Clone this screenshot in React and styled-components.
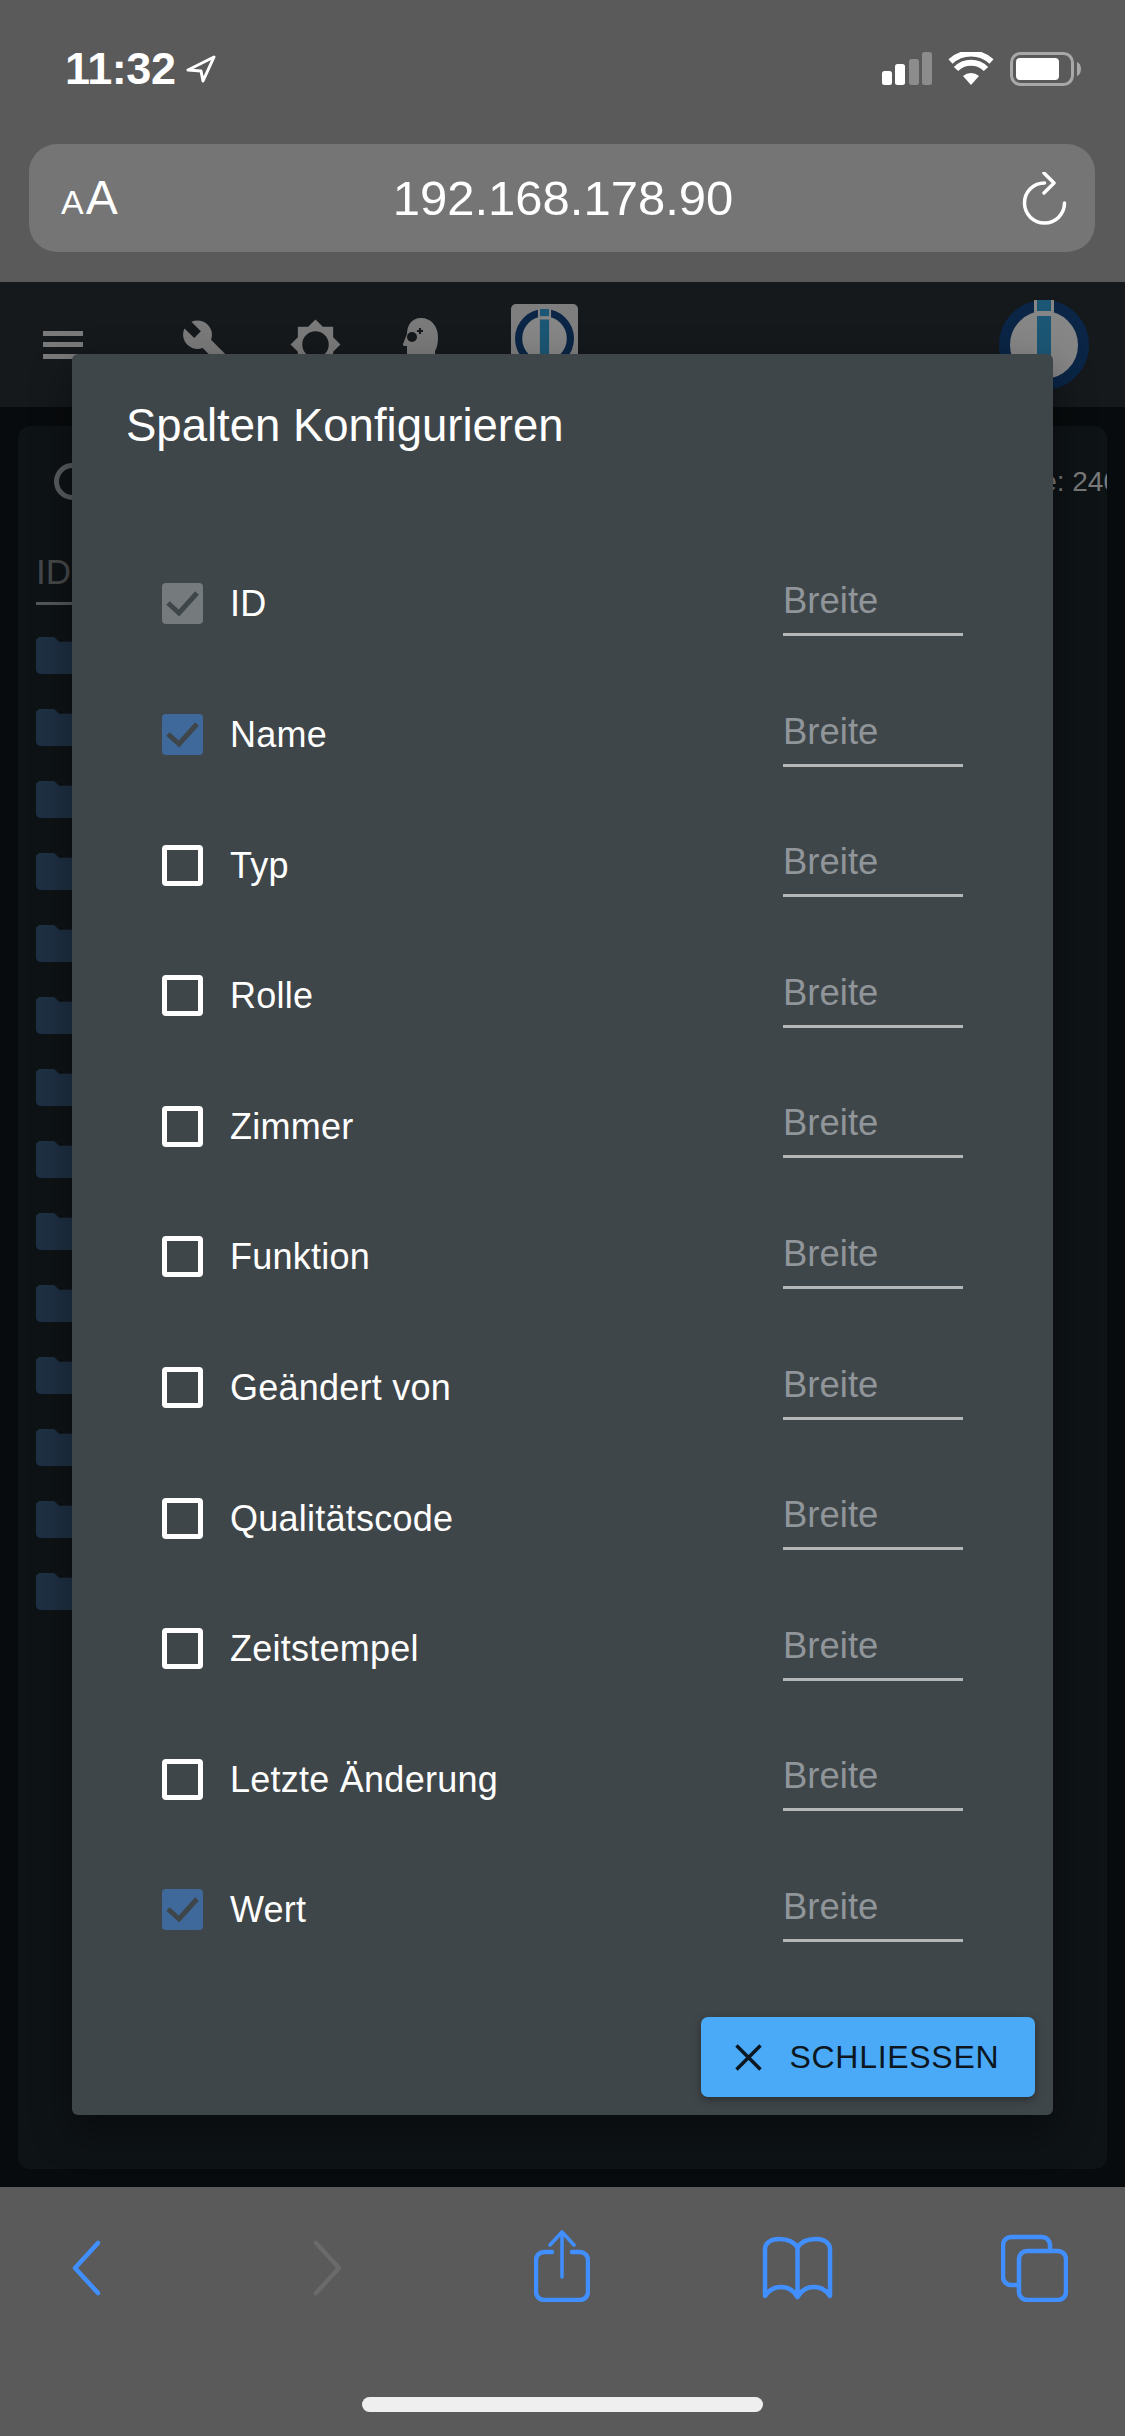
import styled, { createGlobalStyle } from "styled-components";

const GlobalStyle = createGlobalStyle`
  html, body {
    margin: 0;
    padding: 0;
    background: #5a5a5a;
  }
  * {
    box-sizing: border-box;
  }
`;

const Screen = styled.div`
  position: relative;
  width: 1125px;
  height: 2436px;
  overflow: hidden;
  display: flex;
  flex-direction: column;
  font-family: "Liberation Sans", Arial, sans-serif;
`;

/* safari top */
const TopChrome = styled.div`
  height: 282px;
  background: #5a5a5a;
  color: #fff;
  flex: none;
`;

const StatusBar = styled.div`
  height: 144px;
  padding: 52px 44px 0 65px;
  display: flex;
  justify-content: space-between;
  align-items: flex-start;
`;

const TimeGroup = styled.div`
  display: flex;
  align-items: center;
  gap: 10px;
  height: 33px;
`;

const Time = styled.span`
  font-size: 45px;
  font-weight: 700;
  line-height: 33px;
  letter-spacing: -0.4px;
`;

const StatusIcons = styled.div`
  display: flex;
  align-items: flex-start;
  gap: 16px;
`;

const UrlBar = styled.div`
  margin: 0 30px 0 29px;
  height: 108px;
  padding: 0 28px 0 32px;
  border-radius: 28px;
  background: #757575;
  display: grid;
  grid-template-columns: 1fr auto 1fr;
  align-items: center;
`;

const ReaderToggle = styled.div`
  display: flex;
  align-items: baseline;
  gap: 2px;
  padding-top: 4px;
`;

const ReaderLetter = styled.span`
  font-size: ${(props) => props.$size}px;
  line-height: 50px;
`;

const Url = styled.div`
  font-size: 49px;
  line-height: 56px;
  margin: -1px 0 0 -2px;
`;

const ReloadSlot = styled.div`
  display: flex;
  justify-content: flex-end;
  height: 53px;
`;

/* page behind the dialog */
const Page = styled.div`
  flex: 1;
  min-height: 0;
  background: #080b0d;
  display: flex;
  flex-direction: column;
`;

const Header = styled.header`
  height: 125px;
  flex: none;
  padding: 0 36px 0 43px;
  background: #15191c;
  display: flex;
  align-items: center;
`;

const Burger = styled.div`
  width: 40px;
  display: flex;
  flex-direction: column;
  gap: 6.5px;
  span {
    height: 5px;
    background: #7a7a7a;
  }
`;

const HeaderIcon = styled.svg`
  flex: none;
  display: block;
  margin-left: ${(props) => props.$left}px;
  fill: #7a7a7a;
`;

const LogoTile = styled.div`
  flex: none;
  margin-left: 73px;
  width: 67px;
  height: 82px;
  padding: 5px 4px 0;
  border-radius: 5px;
  background: #7e7e7e;
`;

const RoundLogo = styled.div`
  flex: none;
  margin-left: auto;
`;

const Card = styled.section`
  flex: 1;
  min-height: 0;
  margin: 19px 18px 18px;
  padding: 37px 0 0 18px;
  border-radius: 12px;
  background: #0e1316;
  overflow: hidden;
`;

const CardTools = styled.div`
  height: 37px;
  padding-left: 18px;
  display: flex;
  justify-content: space-between;
  align-items: center;
`;

const ToolRing = styled.div`
  width: 37px;
  height: 37px;
  border: 5px solid #5a5d5f;
  border-radius: 50%;
`;

const Count = styled.span`
  margin-right: -12px;
  font-size: 28px;
  color: #7a7a7a;
  white-space: nowrap;
`;

const ColumnHead = styled.div`
  width: 120px;
  margin-top: 46px;
  height: 59px;
  border-bottom: 3px solid #55585a;
  font-size: 35px;
  line-height: 52px;
  color: #46494b;
`;

const FolderList = styled.div`
  margin-top: 32px;
  display: flex;
  flex-direction: column;
  gap: 35px;
`;

const Folder = styled.svg`
  display: block;
  width: 46px;
  height: 37px;
  fill: #1e3043;
`;

/* dialog */
const Dialog = styled.div`
  position: absolute;
  top: 354px;
  left: 72px;
  width: 981px;
  height: 1761px;
  padding: 0 18.5px 18px 0;
  border-radius: 6px;
  background: #3f4649;
  box-shadow: 0 16px 40px rgba(0, 0, 0, 0.4);
  display: flex;
  flex-direction: column;
  color: #fff;
`;

const DialogTitle = styled.h2`
  margin: 0;
  height: 184.7px;
  padding: 47px 0 0 54px;
  font-size: 45.5px;
  font-weight: 400;
  line-height: 50px;
`;

const Rows = styled.div`
  display: flex;
  flex-direction: column;
`;

const Row = styled.div`
  height: 130.6px;
  padding: 0 71.5px 0 90px;
  display: flex;
  align-items: center;
`;

const Check = styled.span`
  flex: none;
  width: 41px;
  height: 41px;
  border-radius: 4px;
  background: ${(props) => props.$bg || "transparent"};
  border: ${(props) => (props.$bg ? "none" : "5px solid #fff")};
  svg {
    display: block;
  }
`;

const RowLabel = styled.span`
  flex: 1;
  margin: 1px 0 0 27px;
  font-size: 36px;
  line-height: 44px;
  letter-spacing: 0.25px;
`;

const WidthField = styled.div`
  width: 180px;
  height: 62px;
  margin-top: 2px;
  padding-top: 5px;
  border-bottom: 3px solid #b4b7b8;
  font-size: 36.5px;
  line-height: 44px;
  color: #90959a;
`;

const CloseButton = styled.button`
  margin: auto 0 0 auto;
  width: 334px;
  height: 80px;
  padding: 0 0 0 34px;
  border: 0;
  border-radius: 7px;
  background: #4aaaf7;
  box-shadow: 0 3px 8px rgba(0, 0, 0, 0.35);
  color: #0c1722;
  display: flex;
  align-items: center;
  gap: 28px;
  font-family: inherit;
  font-size: 32px;
  letter-spacing: 0.7px;
`;

/* safari bottom */
const BottomChrome = styled.div`
  height: 249px;
  flex: none;
  padding: 43px 0 0 72px;
  background: #5a5a5a;
  display: flex;
  flex-direction: column;
`;

const ToolbarIcons = styled.div`
  display: grid;
  grid-template-columns: 242px 220px 228px 239px 67px;
  height: 72px;
`;

const ToolIcon = styled.svg`
  display: block;
  height: 72px;
  width: ${(props) => props.$w}px;
  fill: none;
  stroke: ${(props) => props.$color || "#418fff"};
  stroke-width: 4.5;
  stroke-linecap: round;
  stroke-linejoin: round;
`;

const HomeBar = styled.div`
  width: 401px;
  height: 15px;
  margin: 95px 0 0 290px;
  border-radius: 8px;
  background: #efefef;
`;

const columns = [
  { name: "ID", bg: "#757a7d" },
  { name: "Name", bg: "#40699b" },
  { name: "Typ" },
  { name: "Rolle" },
  { name: "Zimmer" },
  { name: "Funktion" },
  { name: "Geändert von" },
  { name: "Qualitätscode" },
  { name: "Zeitstempel" },
  { name: "Letzte Änderung" },
  { name: "Wert", bg: "#40699b" },
];

const folders = Array.from({ length: 14 }, (_, i) => i);

const BrandMark = ({ size }) => (
  <svg width={size} height={size} viewBox="0 0 90 90" style={{ display: "block" }}>
    <circle cx="45" cy="45" r="39.5" fill="#868686" stroke="#0a2545" strokeWidth="11" />
    <rect x="35" y="0" width="20" height="14" fill="#868686" />
    <rect x="38" y="0" width="14" height="11" fill="#1b5674" />
    <rect x="38" y="16" width="14" height="56" fill="#1b5674" />
  </svg>
);

const App = () => (
  <Screen>
    <GlobalStyle />
    <TopChrome>
      <StatusBar>
        <TimeGroup>
          <Time>11:32</Time>
          <svg width="30" height="28" viewBox="0 0 30 28" fill="none" stroke="#fff" strokeWidth="3" strokeLinejoin="round">
            <path d="M28 2 2 15l13 1 2 10z" />
          </svg>
        </TimeGroup>
        <StatusIcons>
          <svg width="50" height="33" viewBox="0 0 50 33">
            <rect x="0" y="19" width="10" height="14" rx="2.5" fill="#fff" />
            <rect x="13" y="12" width="10" height="21" rx="2.5" fill="#fff" />
            <rect x="27" y="7" width="10" height="26" rx="2.5" fill="#8c8c8c" />
            <rect x="40" y="0" width="10" height="33" rx="2.5" fill="#8c8c8c" />
          </svg>
          <svg width="46" height="33" viewBox="0 0 46 33" fill="none" stroke="#fff" strokeWidth="6">
            <path d="M23 33 15 24a12 12 0 0 1 16 0z" fill="#fff" stroke="none" />
            <path d="M8 17a21 21 0 0 1 30 0" />
            <path d="M2.5 9.5a30 30 0 0 1 41 0" />
          </svg>
          <svg width="71" height="34" viewBox="0 0 71 34">
            <rect x="1.5" y="1.5" width="61" height="31" rx="9" fill="none" stroke="#a8a8a8" strokeWidth="3" />
            <rect x="6" y="6" width="43" height="22" rx="4" fill="#fff" />
            <path d="M67 10c2.500.8 4 3.500 4 7s-1.500 6.200-4 7z" fill="#a8a8a8" />
          </svg>
        </StatusIcons>
      </StatusBar>
      <UrlBar>
        <ReaderToggle>
          <ReaderLetter $size={34}>A</ReaderLetter>
          <ReaderLetter $size={48}>A</ReaderLetter>
        </ReaderToggle>
        <Url>192.168.178.90</Url>
        <ReloadSlot>
          <svg width="45" height="53" viewBox="0 0 45 53" fill="none" stroke="#fff" strokeWidth="3.500" strokeLinecap="round" strokeLinejoin="round">
            <path d="M22.500 11A20 20 0 1 0 42.500 31" />
            <path d="M22 1l10 10-10 10" />
          </svg>
        </ReloadSlot>
      </UrlBar>
    </TopChrome>

    <Page>
      <Header>
        <Burger>
          <span />
          <span />
          <span />
        </Burger>
        <HeaderIcon $left={98} width="53" height="53" viewBox="0 0 24 24">
          <path d="M22.700 19l-9.100-9.100c.9-2.300.4-5-1.500-6.900-2-2-5-2.400-7.400-1.300L9 6 6 9 1.600 4.700C.4 7.100.9 10.100 2.900 12.100c1.900 1.900 4.600 2.400 6.900 1.500l9.100 9.100c.4.4 1 .4 1.400 0l2.300-2.300c.5-.4.5-1.100.1-1.400z" />
        </HeaderIcon>
        <HeaderIcon $left={54.5} width="53" height="53" viewBox="0 0 24 24">
          <path d="M20 15.310L23.310 12 20 8.690V4h-4.690L12 .69 8.690 4H4v4.690L.69 12 4 15.310V20h4.690L12 23.310 15.310 20H20v-4.690zM12 18c-3.310 0-6-2.690-6-6s2.690-6 6-6 6 2.690 6 6-2.690 6-6 6z" />
        </HeaderIcon>
        <HeaderIcon $left={61.5} width="35" height="53" viewBox="0 0 35 53">
          <path d="M35 19C35 8 28 0 18 0 8 0 4 8 4 16L0 26c-.5 1 .5 2 1.500 2H4v14c0 2 2 4 4 4h6v7h18V33c2-3 3-8 3-14z" />
          <circle cx="9" cy="19" r="5" fill="#15191c" />
          <path d="M17 10v6M14 13h6" stroke="#15191c" strokeWidth="2" />
        </HeaderIcon>
        <LogoTile>
          <BrandMark size={59} />
        </LogoTile>
        <RoundLogo>
          <BrandMark size={90} />
        </RoundLogo>
      </Header>
      <Card>
        <CardTools>
          <ToolRing />
          <Count>Zustände: 240</Count>
        </CardTools>
        <ColumnHead>ID</ColumnHead>
        <FolderList>
          {folders.map((i) => (
            <Folder key={i} viewBox="2 4 20 16">
              <path d="M10 4H4c-1.100 0-1.990.9-1.990 2L2 18c0 1.100.9 2 2 2h16c1.100 0 2-.9 2-2V8c0-1.100-.9-2-2-2h-8l-2-2z" />
            </Folder>
          ))}
        </FolderList>
      </Card>
    </Page>

    <BottomChrome>
      <ToolbarIcons>
        <ToolIcon $w={28} viewBox="0 0 28 72">
          <path d="M26 13 3 38l23 25" />
        </ToolIcon>
        <ToolIcon $w={28} $color="#6a6a6a" viewBox="0 0 28 72">
          <path d="M2 13l23 25L2 63" />
        </ToolIcon>
        <ToolIcon $w={56} viewBox="0 0 56 72">
          <path d="M18 22H10a8 8 0 0 0-8 8v32a8 8 0 0 0 8 8h36a8 8 0 0 0 8-8V30a8 8 0 0 0-8-8H38" />
          <path d="M28 47V2M16 15 28 2l12 13" strokeWidth="3.500" />
        </ToolIcon>
        <ToolIcon $w={71} viewBox="0 0 71 72">
          <path d="M35.500 18C32 11 24 9 17 9 9 9 3 13 3 19v47c4-6 9-9 16-9s13 4 16.500 10C39 61 45 57 52 57s12 3 16 9V19c0-6-6-10-14-10-7 0-15 2-18.500 9zM35.500 18v49" />
        </ToolIcon>
        <ToolIcon $w={67} viewBox="0 0 67 72">
          <path d="M49 19v-4a8 8 0 0 0-8-8H10a8 8 0 0 0-8 8v32a8 8 0 0 0 8 8h6" />
          <rect x="18" y="21" width="47" height="49" rx="8" />
        </ToolIcon>
      </ToolbarIcons>
      <HomeBar />
    </BottomChrome>

    <Dialog>
      <DialogTitle>Spalten Konfigurieren</DialogTitle>
      <Rows>
        {columns.map((col) => (
          <Row key={col.name}>
            <Check $bg={col.bg}>
              {col.bg && (
                <svg width="41" height="41" viewBox="0 0 41 41" fill="none" stroke="#3f4649" strokeWidth="5">
                  <path d="M6 20l11 10L35 10" />
                </svg>
              )}
            </Check>
            <RowLabel>{col.name}</RowLabel>
            <WidthField>Breite</WidthField>
          </Row>
        ))}
      </Rows>
      <CloseButton>
        <svg width="27" height="27" viewBox="0 0 27 27" fill="none" stroke="#0c1722" strokeWidth="3.500">
          <path d="M1.500 1.500l24 24M25.500 1.500l-24 24" />
        </svg>
        SCHLIESSEN
      </CloseButton>
    </Dialog>
  </Screen>
);

export default App;
